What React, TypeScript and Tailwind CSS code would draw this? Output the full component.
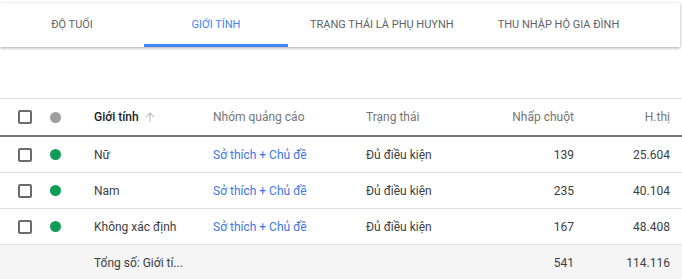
const tabs = ["ĐỘ TUỔI", "GIỚI TÍNH", "TRẠNG THÁI LÀ PHỤ HUYNH", "THU NHẬP HỘ GIA ĐÌNH"];

const rows = [
  { name: "Nữ", group: "Sở thích + Chủ đề", status: "Đủ điều kiện", clicks: "139", impr: "25.604" },
  { name: "Nam", group: "Sở thích + Chủ đề", status: "Đủ điều kiện", clicks: "235", impr: "40.104" },
  { name: "Không xác định", group: "Sở thích + Chủ đề", status: "Đủ điều kiện", clicks: "167", impr: "48.408" },
];

function Checkbox() {
  return <div className="h-[14px] w-[14px] rounded-[2px] border-2 border-[#6b6b6b]" />;
}

export default function App() {
  return (
    <div className="h-[279px] w-[682px] overflow-hidden bg-white font-['Roboto',sans-serif]">
      <div className="pt-[3px] pr-[2px]">
        <div className="flex h-[44px] bg-white shadow-[0_1px_3px_rgba(0,0,0,0.35)]">
          {tabs.map((t, i) => (
            <div
              key={t}
              className={`relative flex min-w-[144px] items-center justify-center px-[22px] text-[11px] ${
                i === 1 ? "text-[#4285f4]" : "text-[#5f6368]"
              }`}
            >
              {t}
              {i === 1 && <div className="absolute bottom-0 left-0 right-0 h-[3px] bg-[#4285f4]" />}
            </div>
          ))}
        </div>
      </div>

      <div className="mt-[51px] border-t border-[#e0e0e0] text-[12px]">
        <div className="flex h-[38px] items-center border-b-2 border-[#757575] text-[#757575]">
          <div className="flex w-[45px] justify-end pr-[13px]"><Checkbox /></div>
          <div className="flex w-[49px] pl-[5px]">
            <div className="h-[11px] w-[11px] rounded-full bg-[#9e9e9e]" />
          </div>
          <div className="flex w-[119px] items-center gap-[4px] font-medium text-[#202124]">
            Giới tính
            <svg width="14" height="14" viewBox="0 0 24 24" fill="#bdbdbd">
              <path d="M4 12l1.41 1.41L11 7.83V20h2V7.83l5.58 5.59L20 12l-8-8-8 8z" />
            </svg>
          </div>
          <div className="w-[153px]">Nhóm quảng cáo</div>
          <div className="w-[100px]">Trạng thái</div>
          <div className="w-[108px] text-right">Nhấp chuột</div>
          <div className="w-[96px] text-right">H.thị</div>
        </div>
        {rows.map((r) => (
          <div key={r.name} className="flex h-[36px] items-center border-b border-[#e0e0e0] text-[#3c4043]">
            <div className="flex w-[45px] justify-end pr-[13px]"><Checkbox /></div>
            <div className="flex w-[49px] pl-[5px]">
              <div className="h-[11px] w-[11px] rounded-full bg-[#0f9d58]" />
            </div>
            <div className="w-[119px]">{r.name}</div>
            <div className="w-[153px] text-[#3b78e7]">{r.group}</div>
            <div className="w-[100px]">{r.status}</div>
            <div className="w-[108px] text-right">{r.clicks}</div>
            <div className="w-[96px] text-right">{r.impr}</div>
          </div>
        ))}
        <div className="flex h-[36px] items-center bg-[#f5f5f5] text-[#3c4043]">
          <div className="w-[94px] shrink-0" />
          <div className="w-[119px] shrink-0 whitespace-nowrap">Tổng số: Giới tí...</div>
          <div className="w-[153px] shrink-0" />
          <div className="w-[100px] shrink-0" />
          <div className="w-[108px] shrink-0 text-right">541</div>
          <div className="w-[96px] shrink-0 text-right">114.116</div>
        </div>
      </div>
    </div>
  );
}
